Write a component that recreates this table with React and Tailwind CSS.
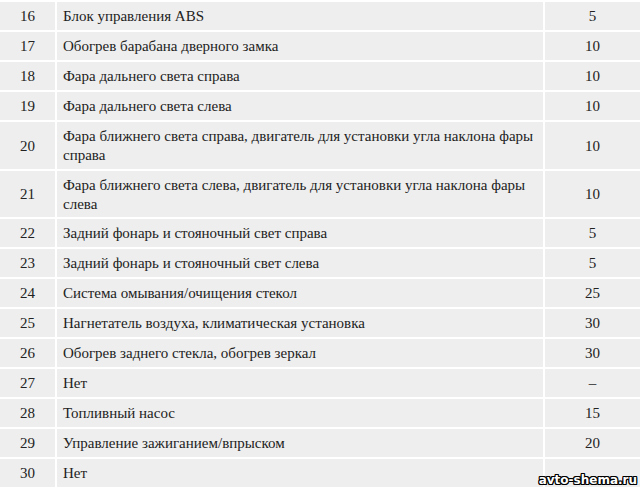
import React from "react";

const rows = [
  ["16", ["Блок управления ABS"], "5", "h-[28px]"],
  ["17", ["Обогрев барабана дверного замка"], "10", "h-[28px]"],
  ["18", ["Фара дальнего света справа"], "10", "h-[28px]"],
  ["19", ["Фара дальнего света слева"], "10", "h-[28px]"],
  ["20", ["Фара ближнего света справа, двигатель для установки угла наклона фары", "справа"], "10", "h-[47px]"],
  ["21", ["Фара ближнего света слева, двигатель для установки угла наклона фары", "слева"], "10", "h-[46px]"],
  ["22", ["Задний фонарь и стояночный свет справа"], "5", "h-[28px]"],
  ["23", ["Задний фонарь и стояночный свет слева"], "5", "h-[28px]"],
  ["24", ["Система омывания/очищения стекол"], "25", "h-[28px]"],
  ["25", ["Нагнетатель воздуха, климатическая установка"], "30", "h-[28px]"],
  ["26", ["Обогрев заднего стекла, обогрев зеркал"], "30", "h-[28px]"],
  ["27", ["Нет"], "–", "h-[28px]"],
  ["28", ["Топливный насос"], "15", "h-[28px]"],
  ["29", ["Управление зажиганием/впрыском"], "20", "h-[28px]"],
  ["30", ["Нет"], "", "h-[28px]"],
];

export default function App() {
  return (
    <div className="relative w-[640px] h-[489px] overflow-hidden bg-white font-serif text-[15px] leading-[19px] text-[#222]">
      <div className="flex flex-col gap-[2px] pt-[2px]">
        {rows.map(([n, lines, v, h]) => (
          <div key={n} className={`grid grid-cols-[55px_486px_1fr] gap-[2px] ${h}`}>
            <div className="bg-[#eeeeee] flex items-center justify-center pt-[1px] font-[Liberation_Serif]">{n}</div>
            <div className="bg-[#eeeeee] pl-[6px] flex flex-col justify-center pt-[1px] whitespace-nowrap font-[Liberation_Serif]">
              {lines.map((l, i) => (
                <div key={i}>{l}</div>
              ))}
            </div>
            <div className="bg-[#eeeeee] flex items-center justify-center pt-[1px] font-[Liberation_Serif]">{v}</div>
          </div>
        ))}
      </div>
      <div className="absolute right-[3px] bottom-[2px] font-[DejaVu_Sans] text-[12px] leading-[14px] font-bold text-white [text-shadow:1px_0_0_#000,-1px_0_0_#000,0_1px_0_#000,0_-1px_0_#000,1px_1px_0_#000,-1px_-1px_0_#000,1px_-1px_0_#000,-1px_1px_0_#000]">
        avto-shema.ru
      </div>
    </div>
  );
}
